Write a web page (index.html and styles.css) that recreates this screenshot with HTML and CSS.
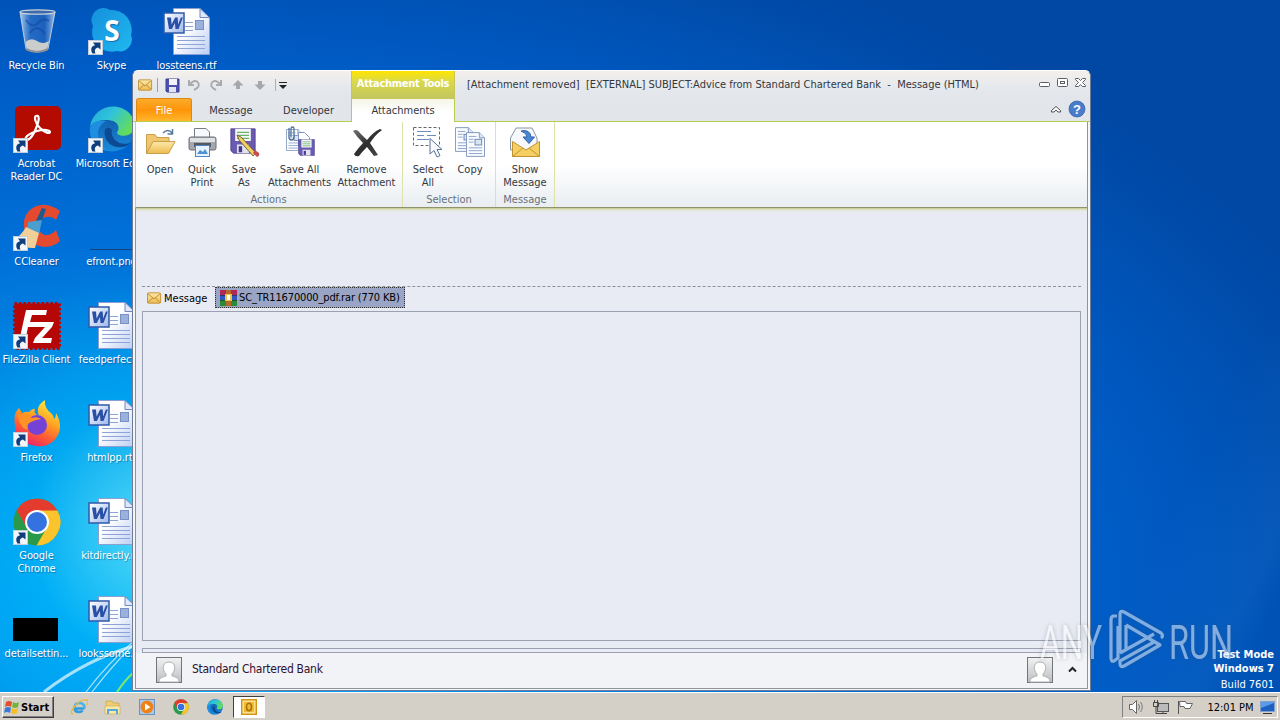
FILE: index.html
```
<!doctype html>
<html lang="en">
  <head>
    <meta charset="UTF-8" />
    <title>Desktop</title>
    <link rel="stylesheet" href="styles.css">
  </head>
  <body>
    <!-- shared icons -->
    <svg class="defs" width="0" height="0">
      <defs>
        <linearGradient id="gPaper" x1="0" y1="0" x2="1" y2="1"><stop offset=".4" stop-color="#fff"/><stop offset="1" stop-color="#bccdf2"/></linearGradient>
        <linearGradient id="gWord" x1="0" y1="0" x2="1" y2="1"><stop offset="0" stop-color="#fff"/><stop offset="1" stop-color="#9db8ec"/></linearGradient>
        <linearGradient id="gEdge" x1="0" y1="0" x2="1" y2=".5"><stop offset="0" stop-color="#1fa8e0"/><stop offset=".5" stop-color="#31c4d8"/><stop offset="1" stop-color="#63dc5c"/></linearGradient>
        <linearGradient id="gEdge2" x1="0" y1="0" x2="0" y2="1"><stop offset="0" stop-color="#0c4f9c"/><stop offset="1" stop-color="#1a8bdc"/></linearGradient>
        <linearGradient id="gSkype" x1="0" y1="0" x2="1" y2="1"><stop offset="0" stop-color="#1590dc"/><stop offset="1" stop-color="#20b8f0"/></linearGradient>
        <linearGradient id="gFox" x1=".8" y1="0" x2=".3" y2="1"><stop offset="0" stop-color="#fff04a"/><stop offset=".4" stop-color="#ffa520"/><stop offset=".7" stop-color="#ff5b35"/><stop offset="1" stop-color="#e8206c"/></linearGradient>
        <linearGradient id="gFold" x1="0" y1="0" x2="0" y2="1"><stop offset="0" stop-color="#fde9a8"/><stop offset="1" stop-color="#eebb50"/></linearGradient>
        <linearGradient id="gBin" x1="0" y1="0" x2="1" y2="0"><stop offset="0" stop-color="#c3dcf5" stop-opacity=".9"/><stop offset=".3" stop-color="#3c78c8" stop-opacity=".6"/><stop offset=".7" stop-color="#2d68bc" stop-opacity=".6"/><stop offset="1" stop-color="#b4d0ee" stop-opacity=".9"/></linearGradient>
        <linearGradient id="gGrey" x1="0" y1="0" x2="0" y2="1"><stop offset="0" stop-color="#f2f2f2"/><stop offset="1" stop-color="#bcbec1"/></linearGradient>
        <linearGradient id="gX" x1="0" y1="0" x2="1" y2="1"><stop offset="0" stop-color="#777"/><stop offset=".5" stop-color="#2e2e2e"/><stop offset="1" stop-color="#4c4c4c"/></linearGradient>

        <symbol id="shortcut" viewBox="0 0 15 15">
          <rect x=".5" y=".5" width="14" height="14" fill="#f2f5f9" stroke="#c5cdd8"/>
          <path d="M4.500 13.500C2 9 3.500 6 7 5.200L5 2.500H12.500V9.500L10 7.600C7.400 8.300 6 10 7.500 13.500z" fill="#103e7c"/>
        </symbol>
        <symbol id="word" viewBox="0 0 48 48">
          <path d="M10.500.5H37L46.500 10V46.500H10.500z" fill="url(#gPaper)" stroke="#8b9fd0"/>
          <path d="M37 .5V9.500H46.500z" fill="#dfe8fb" stroke="#7187bd"/>
          <path d="M22 14.500h8M22 18.500h8M22 22.500h8M14 28.500h28M14 32.500h28M14 36.500h28M14 40.500h28" stroke="#8ea4d6"/>
          <rect x="32.500" y="12.500" width="8" height="9" fill="#9ab0dd" stroke="#7890c4"/>
          <rect x="1" y="5" width="20" height="20" fill="url(#gWord)" stroke="#3159a8" stroke-width="1.500"/>
          <path d="M4 9.500h4l.6 7 3.500-7h2.600l.4 7 2.800-7h2L15.500 21h-3l-.6-6-3 6H6z" fill="#2950a5"/>
        </symbol>
        <symbol id="chrome" viewBox="0 0 48 48">
          <circle cx="24" cy="24" r="23.500" fill="#2a9a4a"/>
          <path d="M3.600 12.300L14 30 24 13H44.400A23.500 23.500 0 0 0 3.600 12.300z" fill="#e33b2e"/>
          <path d="M24 12.500H44.500A23.500 23.500 0 0 1 23.500 47.500L34 29.500z" fill="#fbc42c"/>
          <circle cx="24" cy="24" r="12" fill="#fff"/>
          <circle cx="24" cy="24" r="10" fill="#3472e0"/>
        </symbol>
        <symbol id="edge" viewBox="0 0 48 48">
          <circle cx="24" cy="24" r="23.500" fill="url(#gEdge2)"/>
          <path d="M1 22C3 8 14 .5 25 .5 38 .5 47.500 10 47.500 20c0 7-5 11-11 11-5 0-8-2-7-4 3-4 1-11-7-12C12 13.500 3 17 1 22z" fill="url(#gEdge)"/>
          <path d="M17 24c-3 9 4 19 15 19 5 0 9-2 12-5-5 2-12 2-16-2-4-3-5-8-4-11-2-3-5-3-7-1z" fill="#0d4a94"/>
          <path d="M1 23c2-7 10-9 17-7-7 3-10 10-8 18 1 6 6 11 12 13C9 47 0 36 1 23z" fill="#1d8ee0"/>
        </symbol>
        <symbol id="envelope" viewBox="0 0 16 14">
          <rect x=".5" y="1.500" width="14" height="11" rx="1" fill="url(#gFold)" stroke="#c0913a"/>
          <path d="M1 2.500l6.500 5.500L14 2.500M1 12l5-5M14 12L9 7" fill="none" stroke="#b98a30"/>
        </symbol>
        <symbol id="floppy" viewBox="0 0 30 30">
          <path d="M1 1H29V29H4L1 26z" fill="#6a5bb0" stroke="#4a3d90"/>
          <rect x="6" y="1" width="18" height="14" fill="#f4f7fb"/>
          <path d="M8 5h14M8 8.500h14M8 12h14" stroke="#6bb36a" stroke-width="1.400"/>
          <rect x="8" y="19" width="14" height="10" fill="#dfe2ef"/>
          <rect x="10" y="21" width="4" height="7" fill="#463a88"/>
        </symbol>
        <symbol id="page" viewBox="0 0 20 26">
          <path d="M.5.5H14L19.500 6V25.500H.5z" fill="#fafcff" stroke="#8097bb"/>
          <path d="M14 .5V6h5.500" fill="#dce6f4" stroke="#8097bb"/>
          <path d="M3 4.500h8M3 7.500h5M3 10.500h5M3 16.500h14M3 19.500h14M3 22.500h14" stroke="#8ba4c9"/>
          <rect x="9.500" y="7.500" width="7" height="6" fill="#d7e5f4" stroke="#6c87b2"/>
        </symbol>
        <symbol id="avatar" viewBox="0 0 26 26">
          <rect x=".5" y=".5" width="25" height="25" fill="url(#gGrey)" stroke="#717478"/>
          <path d="M3 25c0-4 3-5 7-6v-2c-4-4-4-12 3-12s7 8 3 12v2c4 1 7 2 7 6z" fill="#fff" stroke="#aeb1b5"/>
        </symbol>
      </defs>
    </svg>

    <div class="desktop">
      <svg class="rays" width="420" height="240" viewBox="0 0 420 240">
        <path d="M44 214Q85 182 134 168" stroke="#fff" stroke-width="3" opacity=".65" fill="none"/>
        <path d="M86 214Q108 185 134 163M92 214Q112 188 134 166" stroke="#fff" stroke-width="1.200" opacity=".65" fill="none"/>
        <path d="M117 214Q125 202 134 194" stroke="#7ee86a" stroke-width="2" fill="none"/>
      </svg>

      <div class="icons">
        <div class="icon">
          <svg width="48" height="48" viewBox="0 0 48 48">
            <path d="M7 4L13 41Q24 47 35 41L42 4z" fill="url(#gBin)" stroke="#b7cce4"/>
            <ellipse cx="24.500" cy="4" rx="17.500" ry="2.200" fill="#3d6aa8" stroke="#c9d2dc" stroke-width="1.300"/>
            <path d="M13 12Q19 21 25 15T36 13M17 25Q24 15 32 26" fill="none" stroke="#1448a0" stroke-width="2" opacity=".6"/>
            <path d="M12.500 34Q18 29 24 33T36 33L34 42Q24 46 14 42z" fill="#ded8cd" opacity=".9"/>
            <path d="M13 41Q24 47 35 41" fill="none" stroke="#8d9096" stroke-width="2"/>
          </svg>
          <span>Recycle Bin</span>
        </div>
        <div class="icon">
          <svg width="48" height="48" viewBox="0 0 48 48">
            <rect x="2" y="0" width="46" height="44" rx="5" fill="#b30b00"/>
            <path d="M13 34c-2-3 4-7 11-9s13-1 13 1-5 1-10-4-6-11-4-12 4 1 2 7-7 18-12 17z" fill="none" stroke="#fff" stroke-width="2.200"/>
            <use href="#shortcut" y="32" width="15" height="15"/>
          </svg>
          <span>Acrobat<br>Reader DC</span>
        </div>
        <div class="icon">
          <svg width="48" height="48" viewBox="0 0 48 48">
            <path d="M47 7C31-6 9 3 11 23c2 19 23 26 36 14l-4-11c-7 8-17 6-17-3s9-14 17-7z" fill="#e5492e"/>
            <path d="M29 4l4 1-6 18-6-2z" fill="#1f5b90"/>
            <path d="M15 18l14-2-3 14-12-4z" fill="#4a9fd0"/>
            <path d="M13 23L26 29 22 44Q8 45 0 36 8 32 13 23z" fill="#f0cf98"/>
            <use href="#shortcut" y="32" width="15" height="15"/>
          </svg>
          <span>CCleaner</span>
        </div>
        <div class="icon">
          <svg width="48" height="48" viewBox="0 0 48 48">
            <rect x="1.500" y="1.500" width="45" height="45" fill="#b60707" stroke="#b60707" stroke-width="3" stroke-dasharray="2.500 2"/>
            <path d="M13 8H34L33 13H19L17 20H27L26 25H15L13 35H7zM25 20H41L39 25 29 36H39L38 41H20L22 36 32 25H24z" fill="#fff"/>
            <use href="#shortcut" y="32" width="15" height="15"/>
          </svg>
          <span>FileZilla Client</span>
        </div>
        <div class="icon">
          <svg width="48" height="48" viewBox="0 0 48 48">
            <path d="M2 14Q4 10 6 8L9 13Q13 11 16 12 20 8 22 9 20 14 26 16 22 6 32 0 31 8 38 13 41 16 41 19 43 18 43 13 50 25 45 35 38 48 23 46 2 43 2 26 1 20 2 14z" fill="url(#gFox)"/>
            <circle cx="24" cy="25" r="10" fill="#7542d8"/>
            <path d="M5 14Q15 14 19 18 24 16 28 19 22 20 18 22 13 24 15 30 6 28 5 14z" fill="#ff9226"/>
            <use href="#shortcut" y="32" width="15" height="15"/>
          </svg>
          <span>Firefox</span>
        </div>
        <div class="icon">
          <svg width="48" height="48" viewBox="0 0 48 48">
            <use href="#chrome" width="48" height="48"/>
            <use href="#shortcut" y="32" width="15" height="15"/>
          </svg>
          <span>Google<br>Chrome</span>
        </div>
        <div class="icon">
          <svg width="48" height="48" viewBox="0 0 48 48">
            <rect x="0" y="22" width="45" height="23" fill="#000"/>
          </svg>
          <span>detailsettin...</span>
        </div>

        <div class="icon">
          <svg width="48" height="48" viewBox="0 0 48 48">
            <path d="M22 2A20 20 0 0 1 43 27 12 12 0 0 1 29 43 20 20 0 0 1 5 18 12 12 0 0 1 22 2z" fill="url(#gSkype)"/>
            <text class="skype-s" x="24" y="33" text-anchor="middle">S</text>
            <use href="#shortcut" y="32" width="15" height="15"/>
          </svg>
          <span>Skype</span>
        </div>
        <div class="icon">
          <svg width="48" height="48" viewBox="0 0 48 48">
            <use href="#edge" width="48" height="46"/>
            <use href="#shortcut" y="32" width="15" height="15"/>
          </svg>
          <span>Microsoft Edge</span>
        </div>
        <div class="icon">
          <svg width="48" height="48" viewBox="0 0 48 48">
            <path d="M2 45.500H48" stroke="#14417c"/>
          </svg>
          <span>efront.png</span>
        </div>
        <div class="icon"><svg width="48" height="48"><use href="#word"/></svg><span>feedperfect...</span></div>
        <div class="icon"><svg width="48" height="48"><use href="#word"/></svg><span>htmlpp.rtf</span></div>
        <div class="icon"><svg width="48" height="48"><use href="#word"/></svg><span>kitdirectly.rtf</span></div>
        <div class="icon"><svg width="48" height="48"><use href="#word"/></svg><span>lookssome.rtf</span></div>

        <div class="icon"><svg width="48" height="48"><use href="#word"/></svg><span>lossteens.rtf</span></div>
      </div>

      <div class="build">
        <b>Test Mode</b>
        <b>Windows 7</b>
        <span>Build 7601</span>
      </div>
    </div>

    <div class="window">
      <div class="titlebar">
        <div class="qat">
          <svg width="152" height="18" viewBox="0 0 152 18">
            <use href="#envelope" x="2" y="2" width="15" height="14"/>
            <path d="M21.500 2v14" stroke="#9aa0a8"/>
            <path d="M30 3H43V16H31L30 15z" fill="#4c51ad" stroke="#3b3f91"/>
            <rect x="33" y="3" width="8" height="6" fill="#f1f4fc"/>
            <rect x="33" y="11" width="7" height="5" fill="#dfe3f2"/>
            <path d="M53 4v5h5M53.500 8.500Q59 2.500 62 6.500T58 14" fill="none" stroke="#a9abae" stroke-width="2"/>
            <path d="M85 4v5h-5M84.500 8.500Q79 2.500 76 6.500T80 14" fill="none" stroke="#a9abae" stroke-width="2"/>
            <path d="M102 4l5.500 5.500H104V13h-4V9.500h-3.500zM124 14l5.500-5.500H126V5h-4v3.500h-3.500z" fill="#a5a7aa"/>
            <path d="M139.500 3v12" stroke="#aab0b8"/>
            <path d="M143 6.500h8" stroke="#222"/>
            <path d="M143 9h8l-4 4z" fill="#222"/>
          </svg>
        </div>
        <div class="tools-tab">Attachment Tools</div>
        <div class="title">[Attachment removed]&nbsp; [EXTERNAL] SUBJECT:Advice from Standard Chartered Bank&nbsp; -&nbsp; Message (HTML)</div>
        <svg class="win-buttons" width="50" height="14" viewBox="0 0 50 14">
          <rect x="2.500" y="6.500" width="10" height="4" rx="1" fill="#fff" stroke="#5a5f66"/>
          <rect x="20.500" y="2.500" width="10" height="8" rx="1" fill="#fff" stroke="#5a5f66"/>
          <rect x="23.500" y="5.500" width="4" height="2" fill="none" stroke="#5a5f66"/>
          <path d="M38.500 2.500h3l2 2 2-2h3v1l-3 3 3 3v1h-3l-2-2-2 2h-3v-1l3-3-3-3z" fill="#fff" stroke="#5a5f66"/>
        </svg>
      </div>

      <div class="tabs">
        <div class="tab file">File</div>
        <div class="tab message">Message</div>
        <div class="tab developer">Developer</div>
        <div class="tab active">Attachments</div>
        <svg class="help" width="40" height="18" viewBox="0 0 40 18">
          <path d="M3.500 10.500l4.500-4 4.500 4v1.500h-2.500L8 10l-2 2H3.500z" fill="#fff" stroke="#4b4f55"/>
          <circle cx="29" cy="9" r="8" fill="#4a7ccb" stroke="#2e5ca8" stroke-width=".7"/>
          <text class="help-mark" x="29" y="13.500" text-anchor="middle">?</text>
        </svg>
      </div>

      <div class="ribbon">
        <div class="group actions">
          <div class="buttons">
            <div class="btn">
              <svg width="32" height="32" viewBox="0 0 32 32">
                <path d="M2.500 27V8.500H11l2 3H25V17z" fill="#eec76e" stroke="#c99e4c"/>
                <path d="M2.500 27.500L9 15.500H31L24.500 27.500z" fill="url(#gFold)" stroke="#c99e4c"/>
                <path d="M19 7Q24 2 28 7M28.500 3v5h-5" fill="none" stroke="#55799f" stroke-width="1.500"/>
              </svg>
              <span>Open</span>
            </div>
            <div class="btn">
              <svg width="32" height="32" viewBox="0 0 32 32">
                <path d="M8.500 14V2.500H20L23.500 6V14" fill="#f8f9fc" stroke="#777d86"/>
                <rect x="3" y="11" width="27" height="13" rx="2" fill="#a4a7ad" stroke="#6c7077"/>
                <path d="M4 12h25v4H4z" fill="#dfe1e4"/>
                <path d="M8 17h17v4H8z" fill="#55595f"/>
                <rect x="9.500" y="19.500" width="14" height="11" fill="#e6f2ff" stroke="#4f86c6"/>
                <path d="M11 28l3-4 3 2 2-3 3 5z" fill="#4f92d4"/>
              </svg>
              <span>Quick<br>Print</span>
            </div>
            <div class="btn">
              <svg width="32" height="32" viewBox="0 0 32 32">
                <use href="#floppy" x="2" y="2" width="26" height="26"/>
                <path d="M9 9l4 2 15 16-3 3L11 14z" fill="#f3cf62" stroke="#5b4a22" stroke-width=".8"/>
                <path d="M27 24l4 3q1 3-2 4l-4-4z" fill="#c54f4f"/>
              </svg>
              <span>Save<br>As</span>
            </div>
            <div class="btn wide">
              <svg width="32" height="32" viewBox="0 0 32 32">
                <use href="#page" x="2" y="3" width="17" height="22"/>
                <path d="M14.500 6.500h6l5 5V20h-11z" fill="#fff" stroke="#8097bb"/>
                <path d="M5 2v9q0 3 2.500 3t2.500-3V3q0-2-1.500-2T7 3v8" fill="none" stroke="#4f719d" stroke-width="1.300"/>
                <use href="#floppy" x="14" y="13" width="17" height="17"/>
              </svg>
              <span>Save All<br>Attachments</span>
            </div>
            <div class="btn wide2">
              <svg width="32" height="32" viewBox="0 0 32 32">
                <path d="M2 5q4-3 7 2l7 7q6-8 13-11l2 1q-7 5-12 13l8 12-4 1-7-9q-5 5-8 9-4 1-5-2 5-7 9-11Q6 11 2 5z" fill="url(#gX)"/>
              </svg>
              <span>Remove<br>Attachment</span>
            </div>
          </div>
          <div class="group-name">Actions</div>
        </div>
        <div class="group selection">
          <div class="buttons">
            <div class="btn">
              <svg width="32" height="32" viewBox="0 0 32 32">
                <rect x="1.500" y="1.500" width="26" height="18" fill="none" stroke="#666" stroke-dasharray="3 2"/>
                <path d="M5 5.500h14M5 9.500h7M15 9.500h9M5 13.500h12" stroke="#6c8dbd"/>
                <path d="M18 12.500V28l4-3.500 3 6.500 3-1.500-3-6h5z" fill="#f7faff" stroke="#5c7291"/>
              </svg>
              <span>Select<br>All</span>
            </div>
            <div class="btn">
              <svg width="32" height="32" viewBox="0 0 32 32">
                <use href="#page" x="1" y="1" width="19" height="25"/>
                <use href="#page" x="12" y="6" width="19" height="25"/>
              </svg>
              <span>Copy</span>
            </div>
          </div>
          <div class="group-name">Selection</div>
        </div>
        <div class="group show">
          <div class="buttons">
            <div class="btn">
              <svg width="32" height="32" viewBox="0 0 32 32">
                <path d="M1.500 12L7 2H23L28 12V24H1.500z" fill="#f6f8fb" stroke="#8c95a3"/>
                <path d="M3.500 15.500L17 24 30.500 15.500V30.500H3.500z" fill="#f6cf62" stroke="#c09332"/>
                <path d="M3.500 30.500L14 22M30.500 30.500L20 22" stroke="#c09332"/>
                <path d="M12 5q9-2 10 6h3.500L20 17.500 14 11h4q0-4-6-6z" fill="#4c87d6" stroke="#2f62ab"/>
              </svg>
              <span>Show<br>Message</span>
            </div>
          </div>
          <div class="group-name">Message</div>
        </div>
      </div>

      <div class="content">
        <div class="header-gap"></div>
        <div class="attachments">
          <div class="att"><svg width="15" height="14"><use href="#envelope" width="15" height="14"/></svg><span>Message</span></div>
          <div class="att selected">
            <svg width="17" height="16" viewBox="0 0 17 16">
              <path d="M0 0H17V5H0z" fill="#b02858"/>
              <path d="M0 5H17V10H0z" fill="#2c58c0"/>
              <path d="M0 10H17V16H0z" fill="#2b8a34"/>
              <rect x="6" y="0" width="5" height="16" fill="#b8682c"/>
              <rect x="5" y="4" width="7" height="7" fill="#e9c34c"/>
              <path d="M7 5h3v5H7z" fill="#fff"/>
              <path d="M0 5.500h5M12 5.500h5M0 10.500h5M12 10.500h5" stroke="#222" opacity=".5"/>
            </svg>
            <span>SC_TR11670000_pdf.rar (770 KB)</span>
          </div>
        </div>
        <div class="preview"></div>
        <div class="splitter"></div>
      </div>

      <div class="people">
        <svg width="26" height="26"><use href="#avatar"/></svg>
        <span class="name">Standard Chartered Bank</span>
        <svg class="right-avatar" width="26" height="26"><use href="#avatar"/></svg>
        <svg width="9" height="7" viewBox="0 0 9 7"><path d="M1 5.500L4.500 2 8 5.500" fill="none" stroke="#222" stroke-width="2"/></svg>
      </div>
    </div>

    <svg class="watermark" width="210" height="66" viewBox="0 0 210 66">
      <g class="mark-text">
        <text x="4" y="51" textLength="62" lengthAdjust="spacingAndGlyphs">ANY</text>
        <text x="133" y="51" textLength="64" lengthAdjust="spacingAndGlyphs">RUN</text>
      </g>
      <path d="M81 8L77 8Q75 9 75 12V50Q75 54 78 53L82 50V18M84 45V6Q84 2 88 4L125 25Q128 28 125 30M90 17V42M90 17L124 37L88 58Q84 60 84 55V53L118 34M84 45L118 26" fill="none" stroke="#fff" stroke-width="3.200" stroke-linejoin="round"/>
    </svg>

    <div class="taskbar">
      <div class="start">
        <svg width="16" height="16" viewBox="0 0 16 16">
          <path d="M2 3q3-2 6 0L7 8Q4 6 1 8z" fill="#e0502a"/>
          <path d="M9 3q3 2 6 0l-1 5q-3 2-6 0z" fill="#70b53c"/>
          <path d="M1 9q3-2 6 0l-1 5Q3 12 0 14z" fill="#3a7bd5"/>
          <path d="M8 9q3 2 6 0l-1 5q-3 2-6 0z" fill="#f5bd2a"/>
        </svg>
        <span>Start</span>
      </div>
      <div class="quick">
        <svg width="18" height="18" viewBox="0 0 18 18">
          <path d="M14.500 10.500H4.500Q5 14 9 14q2.500 0 3.500-1.500" fill="none" stroke="#2f9be0" stroke-width="2.600"/>
          <path d="M4.500 10Q4.500 5 9.500 5t5 5.500" fill="none" stroke="#48b2ee" stroke-width="2.600"/>
          <path d="M3 16Q-1 15 5 8T16 2t0 5" fill="none" stroke="#e9b93a" stroke-width="1.300"/>
        </svg>
        <svg width="18" height="18" viewBox="0 0 18 18">
          <path d="M2 3h6l1 2h6v10H2z" fill="#edce72" stroke="#c7a448" stroke-width=".7"/>
          <path d="M1 8h15v8H1z" fill="#fae8a6" stroke="#cdae5a" stroke-width=".7"/>
          <path d="M4 16v-4h9v4" fill="none" stroke="#58a8d8" stroke-width="2"/>
        </svg>
        <svg width="18" height="18" viewBox="0 0 18 18">
          <rect x="1.500" y="1.500" width="15" height="15" fill="#a9cbe8" stroke="#6a94bf"/>
          <circle cx="9" cy="9" r="6.500" fill="#f08018"/>
          <path d="M7 5.500l5.500 3.500L7 12.500z" fill="#fff"/>
        </svg>
        <svg width="18" height="18" viewBox="0 0 18 18"><use href="#chrome" x="1" y="1" width="16" height="16"/></svg>
        <svg width="18" height="18" viewBox="0 0 18 18"><use href="#edge" x="1" y="1" width="16" height="16"/></svg>
      </div>
      <div class="task">
        <svg width="16" height="16" viewBox="0 0 16 16">
          <rect x=".7" y=".7" width="14.600" height="14.600" fill="#fbe08a" stroke="#d09218" stroke-width="1.400"/>
          <rect x="3" y="3" width="10" height="10" fill="#f0bb34"/>
          <ellipse cx="8" cy="8" rx="2.500" ry="3.700" fill="none" stroke="#a8720c" stroke-width="1.600"/>
        </svg>
      </div>
      <div class="tray">
        <svg width="66" height="18" viewBox="0 0 66 18">
          <path d="M2.500 6.500h3L9.500 2.500v13L5.500 11.500h-3z" fill="#fff" stroke="#666"/>
          <path d="M11.500 6q2 3 0 6M13.500 4q3.500 5 0 10" fill="none" stroke="#777"/>
          <rect x="30.500" y="5.500" width="11" height="8" fill="#bbb" stroke="#555"/>
          <path d="M26.500 4.500h5v4h-5zM27.500 2v2M30.500 2v2M29 8.500v7h11M36 14v2" fill="none" stroke="#444"/>
          <path d="M51.500 3v13" stroke="#555"/>
          <path d="M52.500 3.500h6l1 2h6l-2.500 5h-5l-1-2h-4z" fill="#fff" stroke="#666"/>
        </svg>
        <span class="clock">12:01 PM</span>
        <svg width="15" height="13" viewBox="0 0 15 13">
          <rect x=".5" y=".5" width="14" height="10" fill="#1f5fc0" stroke="#7fa0cf"/>
          <path d="M1 7L14 2V1H1z" fill="#5c9bea"/>
          <path d="M3 12.500h9" stroke="#333"/>
        </svg>
      </div>
    </div>
  </body>
</html>
```

FILE: styles.css
```
* {
  box-sizing: border-box;
}

body {
  margin: 0;
  width: 1280px;
  height: 720px;
  overflow: hidden;
  display: flex;
  flex-direction: column;
  position: relative;
  font: 11px/13px "DejaVu Sans Condensed", "DejaVu Sans", sans-serif;
  font-stretch: condensed;
}

svg {
  display: block;
  flex: none;
}

.defs {
  position: absolute;
}

/* Desktop */
.desktop {
  height: 692px;
  position: relative;
  overflow: hidden;
  background:
    linear-gradient(117deg, transparent 88%, rgba(90, 170, 240, 0.08) 95%, transparent 97%),
    radial-gradient(ellipse 240px 260px at 150px 530px, rgba(105, 230, 245, 0.8), rgba(0, 190, 250, 0.4) 50%, transparent),
    radial-gradient(ellipse 1250px 700px at 180px 590px, #00aefa, #0094ea 25%, #0070d8 50%, #005cc6 75%, #0048a4);
}

.rays {
  position: absolute;
  left: 0;
  bottom: -26px;
}

.icons {
  position: relative;
  display: grid;
  grid-auto-flow: column;
  grid-template-rows: repeat(7, 98px);
  grid-auto-columns: 75px;
  width: 224px;
  margin-left: -1px;
}

.icon {
  display: flex;
  flex-direction: column;
  align-items: center;
  gap: 3px;
  padding-top: 8px;
  color: #fff;
  text-align: center;
  white-space: nowrap;
  letter-spacing: -0.1px;
  text-shadow: 1px 1px 1px rgba(0, 30, 80, 0.4);
}

.skype-s {
  font: bold 28px "Open Sans", sans-serif;
  fill: #fff;
}

.build {
  position: absolute;
  right: 6px;
  bottom: -2px;
  display: flex;
  flex-direction: column;
  text-align: right;
  line-height: 14px;
  color: #fff;
}

.build span {
  line-height: 18px;
}

/* Outlook window */
.window {
  position: absolute;
  left: 132px;
  top: 70px;
  width: 959px;
  height: 621px;
  display: flex;
  flex-direction: column;
  padding: 0 2px 1px;
  background: #f5f6f8;
  border: 1px solid #6c7c98;
  border-top-color: #fff;
  border-radius: 6px 6px 0 0;
  color: #33373e;
  overflow: hidden;
}

.window > div {
  flex: none;
}

.titlebar,
.tabs {
  display: flex;
  margin: 0 -2px;
  padding: 0 2px 0 3px;
}

.titlebar {
  height: 28px;
  background: linear-gradient(#f4efeb, #e5e9ed 60%, #e2e5ea);
}

.qat {
  width: 215px;
  padding-top: 5px;
}

.tools-tab {
  width: 104px;
  padding-top: 6px;
  text-align: center;
  font-weight: bold;
  letter-spacing: -0.3px;
  white-space: nowrap;
  color: #fff;
  background: linear-gradient(#ffe500, #d9d84c 40%, #c3c75e);
  border: 1px solid #c9c55a;
  border-width: 0 1px 1px;
}

.title {
  flex: 1;
  padding: 7px 0 0 12px;
  white-space: pre;
}

.win-buttons {
  margin: 5px 1px 0 0;
}

.tabs {
  height: 23px;
  align-items: stretch;
  line-height: 23px;
  text-align: center;
  background: #e2e5ea;
  border-bottom: 1px solid #b5cf4c;
}

.file {
  width: 56px;
  margin-top: -1px;
  color: #fff;
  background: linear-gradient(#fbab2c, #ff9408 50%, #ffb62d);
  border: 1px solid #e08614;
  border-bottom: 0;
  border-radius: 3px 3px 0 0;
}

.message {
  width: 78px;
}

.developer {
  width: 77px;
}

.active {
  width: 104px;
  margin: 0 0 -1px 4px;
  background: linear-gradient(#f5f6e8, #fff 60%);
  border: solid #b5cf4c;
  border-width: 0 1px;
}

.help {
  margin: 1px 0 0 auto;
}

.help-mark {
  font: bold 13px "Liberation Sans", sans-serif;
  fill: #fff;
}

/* Ribbon */
.ribbon {
  height: 86px;
  display: flex;
  background: linear-gradient(#fff 50%, #e9edf1);
  border: solid #8e939c;
  border-width: 0 1px 1px;
  border-left-color: #c3c8cf;
  border-bottom-color: #90946c;
}

.group {
  display: flex;
  flex-direction: column;
  justify-content: space-between;
  border-right: 1px solid #dde2a8;
}

.actions {
  width: 267px;
  padding-left: 3px;
}

.selection {
  width: 93px;
  padding-left: 4px;
}

.show {
  width: 59px;
  padding-left: 8px;
}

.buttons {
  display: flex;
  padding-top: 4px;
}

.btn {
  width: 42px;
  flex: none;
  display: flex;
  flex-direction: column;
  align-items: center;
  gap: 5px;
  text-align: center;
  white-space: nowrap;
}

.wide {
  width: 69px;
}

.wide2 {
  width: 65px;
}

.group-name {
  margin-bottom: 1px;
  margin-left: -4px;
  text-align: center;
  color: #66707c;
}

.show .group-name {
  margin-left: -8px;
}

/* Message body */
.window > .content {
  flex: 1;
  display: flex;
  flex-direction: column;
  padding: 0 6px;
  background: linear-gradient(#c5ca8c, #e3e6d8 2px, #e8ebf3 4px);
  border: solid #8e939c;
  border-width: 0 1px;
}

.header-gap {
  height: 79px;
  border-bottom: 1px dashed #8b919d;
}

.attachments {
  display: flex;
  height: 24px;
  color: #000;
}

.att {
  display: flex;
  align-items: center;
  gap: 2px;
  height: 21px;
  padding-left: 5px;
  width: 73px;
  white-space: nowrap;
}

.att span {
  padding-top: 1px;
}

.selected {
  width: 190px;
  padding-left: 4px;
  letter-spacing: -0.15px;
  background: #9aa5c5;
  border: 1px dotted #333;
}

.selected span {
  padding-top: 0;
}

.preview {
  height: 330px;
  border: 1px solid #9ba1b1;
}

.splitter {
  margin-top: 7px;
  height: 5px;
  border: 1px solid #9ba1b1;
}

.people {
  height: 36px;
  display: flex;
  align-items: center;
  padding: 0 10px 2px 20px;
  background: #f1f3f6;
  border: 1px solid #8e939c;
  border-top: 0;
}

.name {
  margin-left: 10px;
  font-size: 12px;
  letter-spacing: -0.28px;
  color: #301030;
}

.right-avatar {
  margin: 0 15px 0 auto;
}

/* ANY.RUN mark over the corner */
.watermark {
  position: absolute;
  left: 1036px;
  top: 608px;
  opacity: 0.5;
  filter: drop-shadow(0 0 2px rgba(60, 70, 90, 0.6));
}

.mark-text {
  font: 49px Roboto, sans-serif;
  fill: #fff;
}

/* Taskbar */
.taskbar {
  height: 28px;
  display: flex;
  align-items: center;
  padding: 1px 2px 0;
  background: #d4d0c8;
  border-top: 1px solid #fff;
}

.start {
  width: 52px;
  height: 22px;
  display: flex;
  align-items: center;
  gap: 1px;
  padding-left: 1px;
  font-weight: bold;
  border: 1px solid;
  border-color: #fff #404040 #404040 #fff;
  box-shadow: inset -1px -1px #808080;
}

.quick {
  display: flex;
  gap: 16px;
  margin-left: 16px;
}

.task {
  width: 32px;
  height: 22px;
  display: flex;
  align-items: center;
  justify-content: center;
  margin-left: 9px;
  background: #fff;
  border: 1px solid;
  border-color: #404040 #fff #fff #404040;
}

.tray {
  width: 156px;
  height: 22px;
  display: flex;
  align-items: center;
  justify-content: space-between;
  margin-left: auto;
  padding: 0 2px 0 4px;
  border: 1px solid;
  border-color: #808080 #fff #fff #808080;
}

.clock {
  margin-left: 8px;
}
```
